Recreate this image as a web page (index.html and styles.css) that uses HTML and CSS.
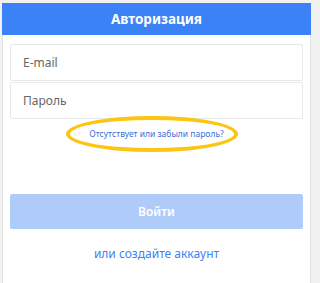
FILE: index.html
```html
<!DOCTYPE html>
<html lang="ru">
<head>
<meta charset="utf-8">
<link rel="stylesheet" href="styles.css">
</head>
<body>
<div class="card">
  <div class="header">Авторизация</div>
  <div class="form">
    <div class="field">E-mail</div>
    <div class="field second">Пароль</div>
    <div class="forgot">
      <a class="forgot-link">Отсутствует или забыли пароль?</a>
      <span class="mark"></span>
    </div>
    <div class="btn">Войти</div>
    <div class="create"><a>или создайте аккаунт</a></div>
  </div>
</div>
</body>
</html>
```
FILE: styles.css
```css
html, body {
  margin: 0;
  padding: 0;
  background: #f1f1f1;
  font-family: "Noto Sans", "Open Sans", sans-serif;
}
.card {
  margin: 3px 0 0 2px;
  width: 309px;
  height: 280px;
  background: #fff;
  box-sizing: border-box;
  border-left: 1px solid #e2e2e2;
  border-right: 1px solid #e2e2e2;
}
.header {
  margin: 0 -1px;
  height: 32px;
  background: #3b82f6;
  color: #fff;
  font-weight: 700;
  font-size: 13.5px;
  display: flex;
  align-items: center;
  justify-content: center;
}
.form {
  padding: 9px 7px 0 7px;
  display: flex;
  flex-direction: column;
}
.field {
  height: 37px;
  box-sizing: border-box;
  border: 1px solid #e8e8e8;
  border-radius: 2px;
  padding-left: 12px;
  display: flex;
  align-items: center;
  color: #666;
  font-size: 12px;
}
.field.second {
  margin-top: 1px;
}
.forgot {
  position: relative;
  margin-top: 9px;
  height: 12px;
  display: flex;
  justify-content: center;
  align-items: center;
}
.forgot-link {
  color: #3b6fd6;
  font-size: 8.5px;
  line-height: 12px;
}
.mark {
  position: absolute;
  left: 50%;
  top: 50%;
  width: 172px;
  height: 36px;
  margin-left: -91px;
  margin-top: -18px;
  box-sizing: border-box;
  border: 4px solid #fcc512;
  border-radius: 50%;
}
.btn {
  margin-top: 54px;
  height: 35px;
  background: #afcbfa;
  border-radius: 2px;
  color: #fff;
  font-weight: 600;
  font-size: 12px;
  display: flex;
  align-items: center;
  justify-content: center;
}
.create {
  margin-top: 17px;
  text-align: center;
  font-size: 12px;
  line-height: 16px;
  color: #3b82f6;
}
```
